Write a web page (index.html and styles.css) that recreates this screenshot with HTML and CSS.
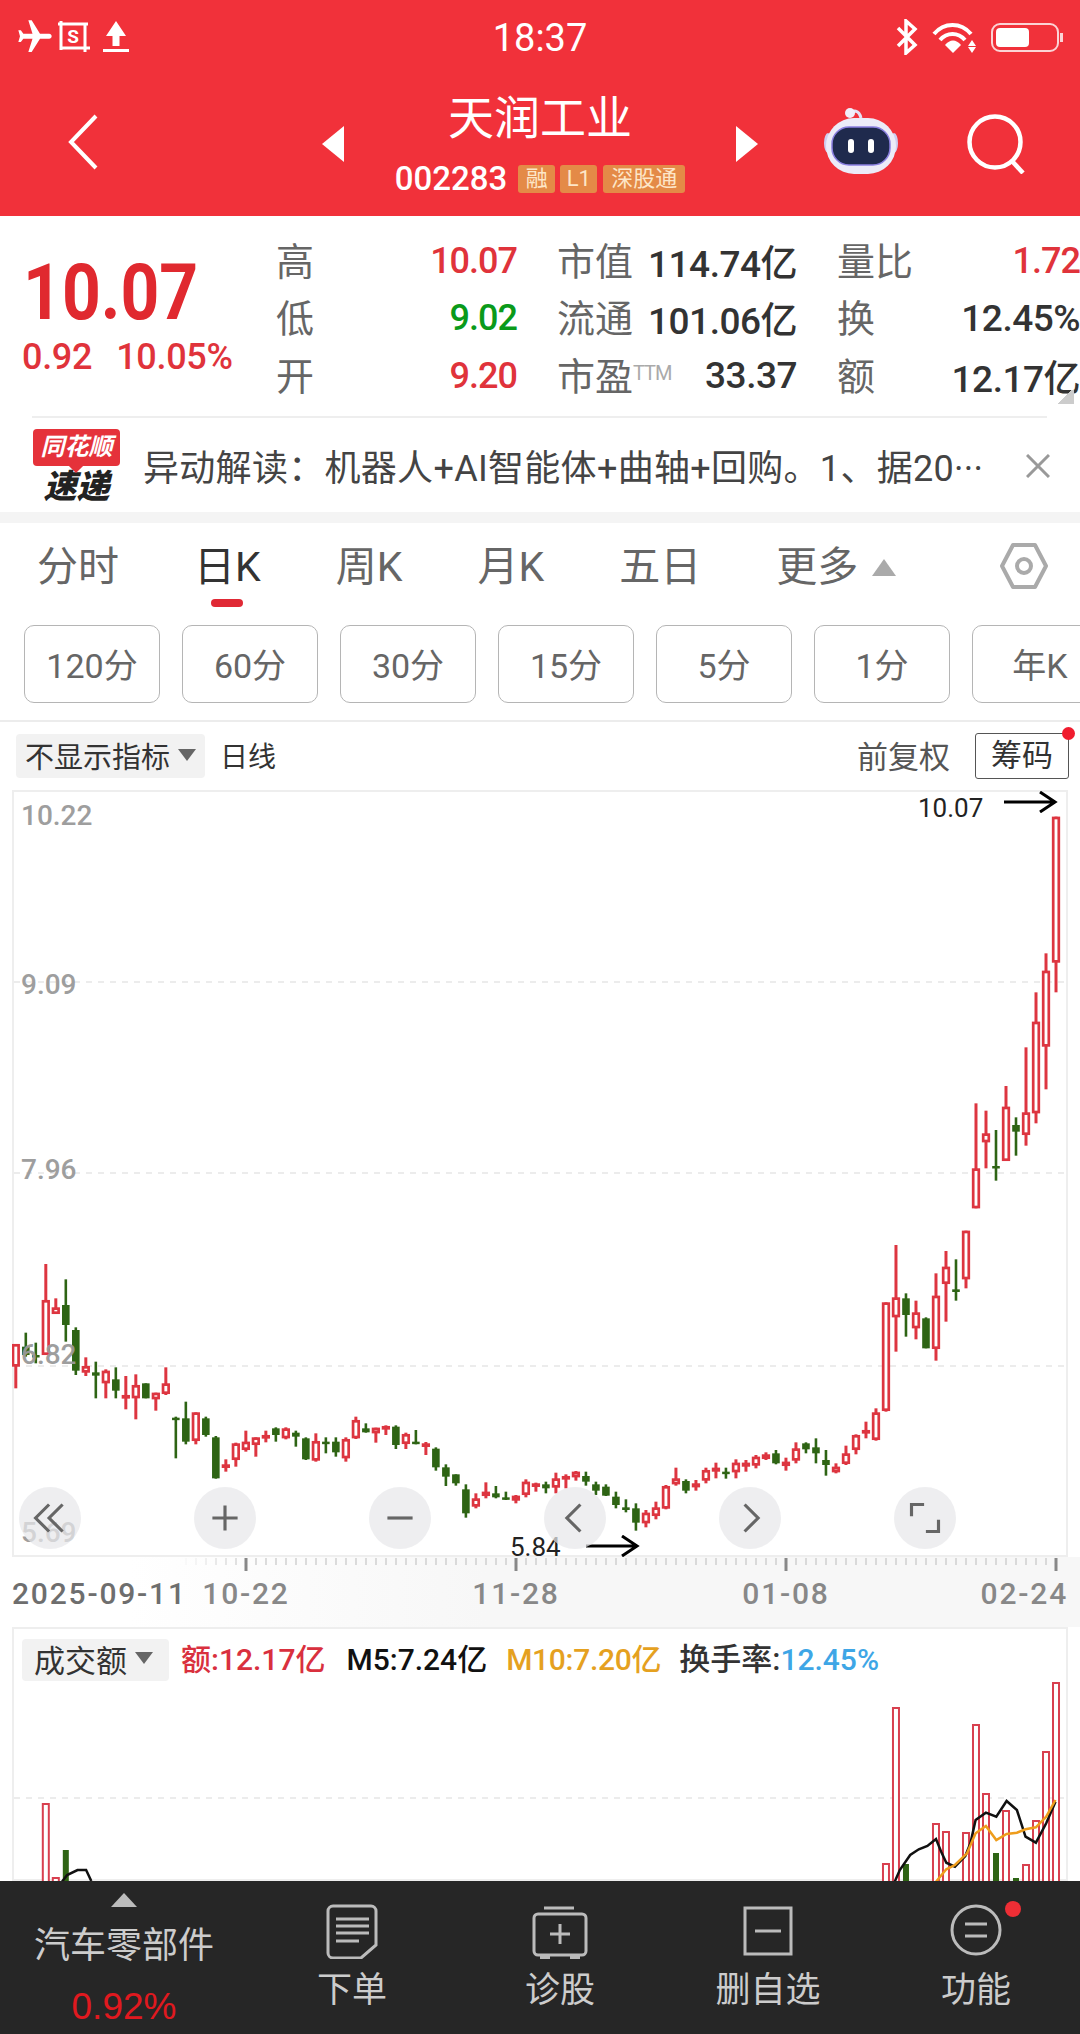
FILE: index.html
```html
<!DOCTYPE html>
<html lang="zh-CN">
  <head>
    <meta charset="UTF-8" />
    <meta name="viewport" content="width=device-width, initial-scale=1.0" />
    <title>天润工业</title>
    <link rel="stylesheet" href="styles.css">
  </head>
  <body>
    <div id="app">
      <div class="top-red">
        <div class="status-bar">
          <div class="status-left">
            <svg class="ic-plane" viewBox="0 0 24 24"><path transform="rotate(90 12 12)" d="M21 16v-2l-8-5V3.5c0-.83-.67-1.5-1.5-1.5S10 2.67 10 3.5V9l-8 5v2l8-2.5V19l-2 1.5V22l3.5-1 3.5 1v-1.5L13 19v-5.5l8 2.5z"/></svg>
            <svg class="ic-sbox" viewBox="0 0 32 32"><path d="M0 3h30M3 0v29M27 3v28M3 27h29" fill="none" stroke="#fff" stroke-width="3"/><text x="15" y="22" text-anchor="middle" font-size="19" font-weight="700" fill="#fff" font-family="Roboto">S</text></svg>
            <svg class="ic-up" viewBox="0 0 26 32"><path d="M13 0l10 15h-6.500v10h-7V15H3z M0 28h26v3H0z"/></svg>
          </div>
          <div class="clock">18:37</div>
          <div class="status-right">
            <svg class="ic-bt" viewBox="0 0 24 36"><path d="M3 9l17 17-9 8V2l9 8L3 27" fill="none" stroke="#fff" stroke-width="3.500"/></svg>
            <svg class="ic-wifi" viewBox="0 0 46 32">
              <path d="M3 13C13 1 30 1 40 13" fill="none" stroke="#fff" stroke-width="4"/>
              <path d="M9 19C16 11 27 11 34 19" fill="none" stroke="#fff" stroke-width="4"/>
              <path d="M14 24C19 18 25 18 30 24l-8 8z"/>
              <path d="M41 19l4 6h-8z M37 26h8l-4 6z"/>
            </svg>
            <div class="battery"><div class="battery-level"></div></div>
          </div>
        </div>
        <div class="nav-bar">
          <svg class="ic-back" viewBox="0 0 31 56"><path d="M29 2L4 28l25 26" fill="none" stroke="#fff" stroke-width="4"/></svg>
          <div class="stock-switch">
            <svg class="ic-tri" viewBox="0 0 22 36"><path d="M22 0v36L0 18z"/></svg>
            <div class="stock-title">
              <div class="stock-name">天润工业</div>
              <div class="stock-code">
                <span>002283</span>
                <span class="tag">融</span>
                <span class="tag">L1</span>
                <span class="tag tag-wide">深股通</span>
              </div>
            </div>
            <svg class="ic-tri" viewBox="0 0 22 36"><path d="M0 0v36l22-18z"/></svg>
          </div>
          <svg class="ic-robot" viewBox="0 0 74 68">
            <path d="M26 8c3-6 9-5 11 3" fill="none" stroke="#e4e1f5" stroke-width="3"/>
            <circle cx="26" cy="6" r="5" fill="#f1eefa"/>
            <ellipse cx="4" cy="36" rx="4" ry="10" fill="#cfcdf0"/>
            <ellipse cx="70" cy="36" rx="4" ry="10" fill="#cfcdf0"/>
            <rect x="2" y="11" width="70" height="56" rx="28" fill="#ecebf8"/>
            <rect x="8" y="20" width="58" height="38" rx="17" fill="#1f2a4d" stroke="#8a7fe0" stroke-width="1.500"/>
            <rect x="24" y="32" width="6" height="14" rx="3" fill="#fff"/>
            <rect x="44" y="32" width="6" height="14" rx="3" fill="#fff"/>
          </svg>
          <svg class="ic-search" viewBox="0 0 60 60"><circle cx="28" cy="28" r="25.500" fill="none" stroke="#fff" stroke-width="4.500"/><path d="M45 47l11 12" stroke="#fff" stroke-width="4.500"/></svg>
        </div>
      </div>

      <div class="quote">
        <div class="quote-main">
          <div class="price">10.07</div>
          <div class="price-sub"><span>0.92</span><span>10.05%</span></div>
        </div>
        <div class="stats">
          <div class="stat"><span class="lbl">高</span><span class="val red">10.07</span></div>
          <div class="stat"><span class="lbl">市值</span><span class="val">114.74亿</span></div>
          <div class="stat"><span class="lbl">量比</span><span class="val red">1.72</span></div>
          <div class="stat"><span class="lbl">低</span><span class="val green">9.02</span></div>
          <div class="stat"><span class="lbl">流通</span><span class="val">101.06亿</span></div>
          <div class="stat"><span class="lbl">换</span><span class="val">12.45%</span></div>
          <div class="stat"><span class="lbl">开</span><span class="val red">9.20</span></div>
          <div class="stat"><span class="lbl">市盈<small>TTM</small></span><span class="val">33.37</span></div>
          <div class="stat"><span class="lbl">额</span><span class="val">12.17亿</span></div>
        </div>
        <div class="corner"></div>
      </div>
      <div class="sep"></div>

      <div class="news">
        <div class="news-logo">
          <div class="logo-top">同花顺</div>
          <div class="logo-bottom">速递</div>
        </div>
        <div class="news-text">异动解读：机器人+AI智能体+曲轴+回购。1、据20···</div>
        <svg class="ic-close" viewBox="0 0 24 24"><path d="M1 1l22 22M23 1L1 23" stroke="#999" stroke-width="3"/></svg>
      </div>

      <div class="period-tabs">
        <div class="tab">分时</div>
        <div class="tab active">日K</div>
        <div class="tab">周K</div>
        <div class="tab">月K</div>
        <div class="tab">五日</div>
        <div class="tab tab-more">更多<i class="tri-up"></i></div>
        <svg class="ic-hex" viewBox="0 0 48 46"><path d="M13 2h22l11 21-11 21H13L2 23z" fill="none" stroke="#aaa" stroke-width="4" stroke-linejoin="round"/><circle cx="24" cy="23" r="7" fill="none" stroke="#aaa" stroke-width="4"/></svg>
      </div>

      <div class="minute-btns">
        <div class="min-btn">120分</div>
        <div class="min-btn">60分</div>
        <div class="min-btn">30分</div>
        <div class="min-btn">15分</div>
        <div class="min-btn">5分</div>
        <div class="min-btn">1分</div>
        <div class="min-btn">年K</div>
      </div>

      <div class="chart-head">
        <div class="chip">不显示指标<i class="tri-down"></i></div>
        <div class="chart-type">日线</div>
        <div class="adjust">前复权</div>
        <div class="chip-btn">筹码<i class="red-dot"></i></div>
      </div>

      <div class="kline-frame">
        <svg id="kline" class="chart-svg" width="1056" height="767"></svg>
        <span class="axis-price" style="top:9px">10.22</span>
        <span class="axis-price" style="top:178px">9.09</span>
        <span class="axis-price" style="top:363px">7.96</span>
        <span class="axis-price" style="top:548px">6.82</span>
        <span class="axis-price" style="top:726px">5.69</span>
        <span class="mark" style="left:906px;top:2px">10.07</span>
        <svg class="mark-arrow" style="left:992px;top:1px" viewBox="0 0 54 22"><path d="M0 11h51M36 1l15 10-15 10" fill="none" stroke="#000" stroke-width="3"/></svg>
        <span class="mark" style="left:498px;top:741px">5.84</span>
        <svg class="mark-arrow" style="left:574px;top:745px" viewBox="0 0 54 22"><path d="M0 11h51M36 1l15 10-15 10" fill="none" stroke="#000" stroke-width="3"/></svg>
        <div class="zoom-btns">
          <div class="round-btn"><svg viewBox="0 0 40 40"><path d="M19 5L4 20l15 15M34 5L19 20l15 15" fill="none" stroke="#666" stroke-width="3.500"/></svg></div>
          <div class="round-btn"><svg viewBox="0 0 40 40"><path d="M6 20h28M20 6v28" stroke="#666" stroke-width="3.500"/></svg></div>
          <div class="round-btn"><svg viewBox="0 0 40 40"><path d="M6 20h28" stroke="#666" stroke-width="3.500"/></svg></div>
          <div class="round-btn"><svg viewBox="0 0 40 40"><path d="M26 5L11 20l15 15" fill="none" stroke="#666" stroke-width="3.500"/></svg></div>
          <div class="round-btn"><svg viewBox="0 0 40 40"><path d="M14 5l15 15-15 15" fill="none" stroke="#666" stroke-width="3.500"/></svg></div>
          <div class="round-btn"><svg viewBox="0 0 40 40"><path d="M5 18V5h14M35 22v13H21" fill="none" stroke="#666" stroke-width="3.500"/></svg></div>
        </div>
      </div>

      <div class="time-axis">
        <svg id="ticks" class="tick-svg" width="1080" height="16"></svg>
        <span class="date date-first">2025-09-11</span>
        <span class="date" style="left:246px">10-22</span>
        <span class="date" style="left:516px">11-28</span>
        <span class="date" style="left:786px">01-08</span>
        <span class="date date-last">02-24</span>
      </div>

      <div class="vol-frame">
        <svg id="volume" class="chart-svg" width="1056" height="254"></svg>
        <div class="vol-legend">
          <div class="chip chip-vol">成交额<i class="tri-down"></i></div>
          <span class="leg leg-red">额:12.17亿</span>
          <span class="leg leg-black">M5:7.24亿</span>
          <span class="leg leg-orange">M10:7.20亿</span>
          <span class="leg leg-dark">换手率:<b>12.45%</b></span>
        </div>
      </div>

      <div class="toolbar">
        <div class="tool tool-sector">
          <i class="tri-sector"></i>
          <div class="sector-name">汽车零部件</div>
          <div class="sector-pct">0.92%</div>
        </div>
        <div class="tool">
          <svg class="tool-ic" viewBox="0 0 56 56"><path d="M9 3h38a5 5 0 0 1 5 5v34L37 55H9a5 5 0 0 1-5-5V8a5 5 0 0 1 5-5z" fill="none" stroke="#bbb" stroke-width="3"/><path d="M12 16h33M12 23h33M12 30h33M12 38h23" stroke="#bbb" stroke-width="3"/></svg>
          <div class="tool-label">下单</div>
        </div>
        <div class="tool">
          <svg class="tool-ic" viewBox="0 0 56 56"><path d="M12 5h30M6 11h44a4 4 0 0 1 4 4v33a4 4 0 0 1-4 4H6a4 4 0 0 1-4-4V15a4 4 0 0 1 4-4z" fill="none" stroke="#bbb" stroke-width="3"/><path d="M18 31h20M28 21v20" stroke="#bbb" stroke-width="3"/><path d="M8 53h10v3H8zM38 53h10v3H38z" fill="#bbb"/></svg>
          <div class="tool-label">诊股</div>
        </div>
        <div class="tool">
          <svg class="tool-ic" viewBox="0 0 56 56"><path d="M5 5h46v46H5z" fill="none" stroke="#bbb" stroke-width="3"/><path d="M15 28h26" stroke="#bbb" stroke-width="3"/></svg>
          <div class="tool-label">删自选</div>
        </div>
        <div class="tool">
          <svg class="tool-ic" viewBox="0 0 56 56"><circle cx="28" cy="27" r="24" fill="none" stroke="#bbb" stroke-width="3"/><path d="M17 21h22M17 33h22" stroke="#bbb" stroke-width="3"/></svg>
          <div class="tool-label">功能</div>
          <i class="tool-dot"></i>
        </div>
      </div>
    </div>
    <script src="chart.js"></script>
  </body>
</html>
```

FILE: styles.css
```css
* {
  margin: 0;
  padding: 0;
  box-sizing: border-box;
}
html,
body {
  width: 1080px;
  height: 2034px;
  overflow: hidden;
  background-color: #fff;
  font-family: Roboto, "Noto Sans CJK SC", sans-serif;
}
i {
  display: block;
  font-style: normal;
}
svg {
  display: block;
  fill: #fff;
}
#app {
  width: 1080px;
  height: 2034px;
  overflow: hidden;
}

/* top red area */
.top-red {
  height: 216px;
  background-color: #f1313a;
  color: white;
}
.status-bar {
  height: 72px;
  padding: 2px 21px 0 15px;
  display: flex;
  justify-content: space-between;
  align-items: center;
  position: relative;
}
.status-left,
.status-right {
  display: flex;
  align-items: center;
}
.ic-plane {
  width: 40px;
  height: 40px;
  margin-right: 3px;
}
.ic-sbox {
  width: 32px;
  height: 32px;
  margin-right: 13px;
}
.ic-up {
  width: 26px;
  height: 32px;
}
.clock {
  font-size: 38px;
  position: absolute;
  left: 0;
  right: 0;
  margin-top: 2px;
  text-align: center;
}
.ic-bt {
  width: 24px;
  height: 36px;
  margin-right: 12px;
}
.ic-wifi {
  width: 46px;
  height: 32px;
  margin-right: 14px;
}
.battery {
  width: 68px;
  height: 29px;
  border: 2px solid #fbd3d5;
  border-radius: 9px;
  padding: 3px;
  position: relative;
}
.battery::after {
  content: "";
  position: absolute;
  right: -6px;
  top: 8px;
  width: 3px;
  height: 9px;
  background-color: #fbd3d5;
}
.battery-level {
  width: 33px;
  height: 100%;
  background-color: white;
  border-radius: 4px;
}
.nav-bar {
  height: 144px;
  position: relative;
  display: flex;
  align-items: center;
}
.ic-back {
  width: 31px;
  height: 56px;
  margin: -4px 0 0 67px;
}
.stock-switch {
  display: flex;
  align-items: center;
  margin-left: 224px;
  width: 436px;
  justify-content: space-between;
}
.ic-tri {
  width: 22px;
  height: 36px;
}
.stock-title {
  text-align: center;
}
.stock-name {
  font-size: 46px;
  line-height: 54px;
  margin-top: -4px;
}
.stock-code {
  display: flex;
  align-items: center;
  font-size: 33px;
  font-weight: 500;
  margin-top: 20px;
  gap: 5px;
  line-height: 28px;
}
.stock-code span:first-child {
  margin-right: 6px;
}
.tag {
  width: 37px;
  height: 28px;
  background-color: #e48a47;
  color: #fde6c8;
  font-size: 22px;
  font-weight: 400;
  text-align: center;
  border-radius: 3px;
}
.tag-wide {
  width: 82px;
  margin-left: 1px;
}
.ic-robot {
  width: 74px;
  height: 68px;
  margin: -6px 0 0 66px;
}
.ic-search {
  width: 60px;
  height: 60px;
  margin: -1px 0 0 69px;
}

/* quote */
.quote {
  height: 200px;
  display: flex;
  position: relative;
}
.quote-main {
  width: 276px;
  padding: 37px 0 0 22px;
  flex-shrink: 0;
}
.price {
  font-size: 77px;
  line-height: 80px;
  font-weight: 700;
  color: #e0292f;
  transform: scaleX(0.88);
  transform-origin: 9px 0;
}
.price-sub {
  display: flex;
  gap: 24px;
  font-size: 36px;
  line-height: 44px;
  font-weight: 500;
  color: #e0333b;
  margin-top: 2px;
  letter-spacing: -0.3px;
}
.stats {
  display: grid;
  grid-template-columns: 241px 240px 243px;
  grid-auto-rows: 57.5px;
  column-gap: 40px;
  padding-top: 15px;
  flex-shrink: 0;
  width: 804px;
}
.stat {
  display: flex;
  justify-content: space-between;
  align-items: center;
  white-space: nowrap;
}
.lbl {
  font-size: 38px;
  color: #666;
  margin-bottom: 3px;
}
.lbl small {
  font-size: 20px;
  color: #aaa;
  letter-spacing: -1px;
  vertical-align: 10px;
}
.val {
  font-size: 37px;
  font-weight: 500;
  letter-spacing: -0.5px;
  color: #333;
  margin-top: 2px;
}
.val.red,
.val.green {
  font-size: 36px;
  letter-spacing: -1px;
}
.red {
  color: #e0333b;
}
.green {
  color: #0a9a1a;
}
.corner {
  position: absolute;
  left: 1056px;
  top: 174px;
  width: 18px;
  height: 14px;
  background: linear-gradient(135deg, transparent 50%, #ccc 50%);
}
.sep {
  height: 2px;
  margin: 0 33px 0 32px;
  background-color: #eee;
}

/* news */
.news {
  height: 105px;
  display: flex;
  align-items: center;
  border-bottom: 11px solid #f4f4f4;
  padding-left: 33px;
  position: relative;
}
.news-logo {
  width: 87px;
  margin-top: 2px;
  flex-shrink: 0;
}
.logo-top {
  height: 37px;
  background-color: #e5323a;
  color: white;
  font-size: 24px;
  font-weight: 700;
  font-style: italic;
  text-align: center;
  line-height: 36px;
  border-radius: 4px;
  position: relative;
}
.logo-top::after {
  content: "";
  position: absolute;
  left: 38px;
  bottom: -5px;
  width: 10px;
  height: 10px;
  background-color: #e5323a;
  transform: rotate(45deg);
}
.logo-bottom {
  font-size: 33px;
  line-height: 32px;
  font-weight: 900;
  font-style: italic;
  color: #222;
  text-align: center;
  margin-top: 5px;
}
.news-text {
  font-size: 36px;
  letter-spacing: 0.3px;
  color: #444;
  margin-left: 23px;
  white-space: nowrap;
  width: 860px;
}
.ic-close {
  width: 24px;
  height: 24px;
  position: absolute;
  left: 1026px;
  top: 36px;
}

/* period tabs */
.period-tabs {
  height: 87px;
  display: flex;
  align-items: flex-start;
  padding: 20px 0 0 37px;
  gap: 75px;
  position: relative;
}
.tab {
  font-size: 41px;
  line-height: 48px;
  color: #666;
  position: relative;
}
.tab.active {
  color: #333;
}
.tab.active::after {
  content: "";
  position: absolute;
  left: 17px;
  top: 56px;
  width: 32px;
  height: 8px;
  border-radius: 4px;
  background-color: #e02935;
}
.tab-more {
  display: flex;
  align-items: center;
}
.tri-up {
  width: 0;
  height: 0;
  margin-left: 14px;
  border-left: 12px solid transparent;
  border-right: 12px solid transparent;
  border-bottom: 17px solid #aaa;
}
.ic-hex {
  width: 48px;
  height: 46px;
  position: absolute;
  left: 1000px;
  top: 20px;
}

/* minute buttons */
.minute-btns {
  height: 112px;
  display: flex;
  gap: 22px;
  padding: 15px 0 0 24px;
  border-bottom: 2px solid #ececec;
  overflow: hidden;
}
.min-btn {
  width: 136px;
  height: 78px;
  flex-shrink: 0;
  border: 1px solid #b5b5b5;
  border-radius: 10px;
  font-size: 34px;
  line-height: 80px;
  color: #666;
  text-align: center;
}

/* chart head */
.chart-head {
  height: 68px;
  display: flex;
  align-items: center;
  padding: 0 11px 0 16px;
}
.chip {
  width: 189px;
  height: 44px;
  background-color: #f2f2f2;
  border-radius: 4px;
  display: flex;
  align-items: center;
  padding: 0 0 3px 9px;
  font-size: 29px;
  color: #333;
  white-space: nowrap;
}
.tri-down {
  width: 0;
  height: 0;
  margin-left: 8px;
  border-left: 9px solid transparent;
  border-right: 9px solid transparent;
  border-top: 12px solid #666;
}
.chart-type {
  font-size: 28px;
  color: #333;
  margin: 0 0 3px 15px;
}
.adjust {
  font-size: 31px;
  color: #555;
  margin: 0 0 3px auto;
}
.chip-btn {
  width: 94px;
  height: 46px;
  margin-left: 25px;
  border: 1px solid #555;
  border-radius: 3px;
  font-size: 31px;
  line-height: 43px;
  color: #333;
  text-align: center;
  position: relative;
}
.red-dot {
  position: absolute;
  right: -7px;
  top: -7px;
  width: 13px;
  height: 13px;
  border-radius: 50%;
  background-color: #f01c2e;
}

/* k line */
.kline-frame {
  width: 1056px;
  height: 767px;
  margin-left: 12px;
  position: relative;
  box-shadow: inset 0 0 0 2px #eeeeee;
}
.chart-svg {
  position: absolute;
  left: 0;
  top: 0;
  fill: none;
}
.axis-price {
  position: absolute;
  left: 9px;
  font-size: 28px;
  line-height: 34px;
  font-weight: 500;
  color: #999;
  opacity: 0.95;
}
.mark {
  position: absolute;
  font-size: 26px;
  line-height: 32px;
  color: #222;
}
.mark-arrow {
  position: absolute;
  width: 54px;
  height: 22px;
  fill: none;
}
.zoom-btns {
  position: absolute;
  left: 7px;
  top: 697px;
  display: flex;
  gap: 113px;
}
.round-btn {
  width: 62px;
  height: 62px;
  border-radius: 50%;
  background-color: rgba(232, 232, 234, 0.72);
  display: flex;
  align-items: center;
  justify-content: center;
}
.round-btn svg {
  width: 36px;
  height: 36px;
  fill: none;
}

/* time axis */
.time-axis {
  height: 70px;
  position: relative;
  background: linear-gradient(90deg, #fff 12%, #f7f7f7 45%);
}
.tick-svg {
  position: absolute;
  left: 0;
  top: 0;
  fill: none;
}
.date {
  position: absolute;
  top: 19px;
  font-size: 30px;
  line-height: 36px;
  font-weight: 500;
  letter-spacing: 1.800px;
  color: #888;
  transform: translateX(-50%);
}
.date-first {
  left: 12px;
  color: #6e6e6e;
  transform: none;
}
.date-last {
  left: auto;
  right: 12px;
  transform: none;
}

/* volume */
.vol-frame {
  width: 1056px;
  height: 254px;
  margin-left: 12px;
  position: relative;
  overflow: hidden;
  background-color: #fff;
  box-shadow: inset 0 0 0 2px #eeeeee;
}
.vol-legend {
  position: relative;
  display: flex;
  align-items: center;
  gap: 21px;
  padding: 7px 0 0 10px;
  white-space: nowrap;
}
.chip-vol {
  width: 147px;
  height: 42px;
  font-size: 31px;
  padding-left: 12px;
  margin-right: -9px;
  flex-shrink: 0;
}
.leg {
  font-size: 30px;
  font-weight: 500;
  margin-bottom: 6px;
}
.leg-red {
  color: #d9303e;
}
.leg-black {
  color: #111;
}
.leg-orange {
  color: #e5a11f;
  letter-spacing: -0.3px;
  margin-left: -2px;
}
.leg-dark {
  color: #333;
  font-size: 31px;
  margin-left: -3px;
}
.leg-dark b {
  font-size: 30px;
  font-weight: 500;
  color: #3ea6e6;
}

/* bottom toolbar */
.toolbar {
  height: 153px;
  background-color: #262626;
  display: grid;
  grid-template-columns: 248px repeat(4, 208px);
  color: #ccc;
}
.tool {
  display: flex;
  flex-direction: column;
  align-items: center;
  padding-top: 22px;
  position: relative;
}
.tool-ic {
  width: 56px;
  height: 56px;
}
.tool-label {
  font-size: 35px;
  line-height: 44px;
  margin-top: 10px;
}
.tool-dot {
  position: absolute;
  left: 133px;
  top: 20px;
  width: 16px;
  height: 16px;
  border-radius: 50%;
  background-color: #ee2e35;
}
.tool-sector {
  padding-top: 12px;
}
.tri-sector {
  width: 0;
  height: 0;
  border-left: 13px solid transparent;
  border-right: 13px solid transparent;
  border-bottom: 14px solid #bbb;
}
.sector-name {
  font-size: 36px;
  line-height: 44px;
  margin-top: 17px;
}
.sector-pct {
  font-family: "Liberation Sans", sans-serif;
  font-size: 37px;
  line-height: 44px;
  color: #e0191f;
  margin-top: 17px;
}
```

FILE: chart.js
```js
const RED = "#dd3540";
const GREEN = "#2e6414";
const NS = "http://www.w3.org/2000/svg";

// high, body top, body bottom, low, 1 = up (hollow red) 0 = down (green)
const candles = [
  [312,312,380,445,1],[278,320,345,350,0],[308,345,352,370,0],[72,180,345,345,1],[175,202,222,222,1],
  [118,195,255,305,0],[262,270,392,405,0],[352,378,398,408,1],[365,397,407,475,0],[388,392,430,475,1],
  [382,418,452,475,0],[408,465,475,508,1],[403,435,475,538,1],[430,430,475,475,0],[458,458,478,512,1],
  [382,430,462,465,1],[530,533,538,655,0],[485,535,605,613,0],[517,517,603,613,1],[530,535,585,590,0],
  [588,592,715,716,0],[658,673,682,695,1],[608,610,660,680,1],[572,605,630,635,1],[592,592,615,650,1],
  [572,585,595,607,1],[562,565,585,605,0],[562,565,595,598,1],[572,578,590,620,0],[592,595,658,660,0],
  [580,603,662,665,1],[592,605,610,640,0],[592,605,637,650,0],[592,597,655,665,1],[530,540,595,597,1],
  [550,565,577,578,0],[563,563,580,608,1],[556,558,565,585,1],[556,560,615,627,0],[578,582,612,627,1],
  [570,605,612,613,0],[606,610,620,645,1],[622,626,682,692,0],[673,682,710,738,0],[703,703,730,737,0],
  [733,748,820,833,0],[760,775,800,805,1],[727,755,768,775,1],[738,760,772,775,0],[755,772,778,780,0],
  [765,767,782,790,1],[718,725,765,772,1],[728,730,738,755,1],[725,733,745,760,0],[698,715,743,760,1],
  [703,708,712,745,1],[693,695,712,722,1],[695,708,725,737,0],[725,733,752,765,0],[733,740,767,768,0],
  [755,770,795,805,0],[778,802,810,817,0],[790,805,848,872,0],[810,818,850,862,1],[785,802,828,838,1],
  [735,738,806,808,1],[683,715,733,737,1],[718,723,752,760,0],[720,730,742,752,1],[683,690,722,730,1],
  [668,683,695,715,1],[683,695,702,716,0],[658,668,697,715,1],[660,668,680,695,1],[645,650,677,685,1],
  [637,643,657,660,1],[630,640,670,673,0],[653,665,678,692,1],[607,625,662,670,1],[607,610,628,640,0],
  [595,622,640,670,0],[630,660,675,707,0],[670,680,697,700,1],[617,640,672,675,1],[583,585,630,643,1],
  [545,570,578,595,1],[505,517,600,602,1],[187,187,513,515,1],[15,172,232,335,1],[160,175,225,290,0],
  [182,217,265,298,1],[232,235,325,325,0],[100,167,327,362,1],[33,80,132,245,1],[58,148,156,182,0],
  [-28,-28,118,145,1],[-410,-215,-95,-95,1],[-388,-320,-293,-215,1],[-330,-222,-217,-178,0],[-462,-400,-237,-237,1],
  [-368,-345,-325,-253,0],[-578,-383,-315,-283,1],[-743,-655,-380,-350,1],[-860,-808,-580,-452,1],[-1270,-1270,-832,-743,1],
];

// candle index, page y of the bar top, up/down
const volumes = [
  [3,1803,1],[4,1877,1],[5,1850,0],[87,1863,1],[88,1707,1],[89,1864,0],[92,1823,1],[93,1831,1],
  [95,1832,1],[96,1724,1],[97,1793,1],[98,1853,0],[99,1810,1],[100,1878,0],[101,1864,1],[102,1820,1],
  [103,1751,1],[104,1682,1],
];

const ma5Left = [[180,785],[195,765],[225,750],[250,750],[265,783]];
const ma5Right = [[1030,785],[1045,750],[1075,705],[1100,688],[1125,678],[1150,657],[1165,695],[1180,728],[1205,740],[1235,708],[1250,670],[1265,600],[1295,578],[1325,590],[1355,543],[1385,570],[1410,650],[1440,668],[1470,610],[1497,545]];
const ma10Right = [[1150,785],[1180,748],[1205,735],[1240,700],[1265,640],[1295,618],[1325,660],[1355,642],[1385,638],[1410,628],[1440,622],[1470,590],[1497,540]];

function add(svg, tag, attrs) {
  const el = document.createElementNS(NS, tag);
  Object.keys(attrs).forEach((k) => el.setAttribute(k, attrs[k]));
  svg.appendChild(el);
  return el;
}

function candleX(i) {
  return 3.8 + i * 10.002;
}

function drawKline() {
  const svg = document.getElementById("kline");
  [982, 1173, 1366].forEach((y) => {
    add(svg, "line", { x1: 2, x2: 1054, y1: y - 790, y2: y - 790, stroke: "#e6e6e6", "stroke-width": 1.5, "stroke-dasharray": "6 6" });
  });
  const y = (v) => v / 3 + 450;
  candles.forEach((c, i) => {
    const x = candleX(i);
    const color = c[4] ? RED : GREEN;
    add(svg, "line", { x1: x, x2: x, y1: y(c[0]), y2: y(c[3]), stroke: color, "stroke-width": c[4] ? 3 : 2.6 });
    if (c[4]) {
      add(svg, "rect", { x: x - 2.8, y: y(c[1]) + 1.3, width: 5.6, height: Math.max(y(c[2]) - y(c[1]) - 2.6, 1), fill: "#fff", stroke: color, "stroke-width": 2.7 });
    } else {
      add(svg, "rect", { x: x - 3.8, y: y(c[1]), width: 7.6, height: Math.max(y(c[2]) - y(c[1]), 2.5), fill: color });
    }
  });
}

function drawTicks() {
  const svg = document.getElementById("ticks");
  for (let x = 186; x <= 1056; x += 10) {
    const major = (x - 246) % 270 === 0;
    add(svg, "line", {
      x1: x, x2: x, y1: 1, y2: major ? 14 : 8,
      stroke: major ? "#888" : "#bbb",
      "stroke-width": major ? 3 : 1,
      opacity: x < 246 ? (x - 176) / 70 : 1,
    });
  }
}

function toPoints(pts, offsetX) {
  return pts.map((p) => (p[0] / 2.904 + offsetX).toFixed(1) + "," + (p[1] / 3 - 7).toFixed(1)).join(" ");
}

function drawVolume() {
  const svg = document.getElementById("volume");
  add(svg, "line", { x1: 2, x2: 1054, y1: 171, y2: 171, stroke: "#e6e6e6", "stroke-width": 1.5, "stroke-dasharray": "6 6" });
  volumes.forEach((v) => {
    const x = candleX(v[0]);
    const top = v[1] - 1627;
    if (v[2]) {
      add(svg, "rect", { x: x - 3, y: top + 1, width: 6, height: 260, fill: "#fff", stroke: "#d8404f", "stroke-width": 2 });
    } else {
      add(svg, "rect", { x: x - 3, y: top, width: 6, height: 260, fill: GREEN });
    }
  });
  add(svg, "polyline", { points: toPoints(ma5Left, -12), fill: "none", stroke: "#111", "stroke-width": 2.5 });
  add(svg, "polyline", { points: toPoints(ma5Right, 528), fill: "none", stroke: "#111", "stroke-width": 2.5 });
  add(svg, "polyline", { points: toPoints(ma10Right, 528), fill: "none", stroke: "#ee9d1c", "stroke-width": 2.5 });
}

drawKline();
drawTicks();
drawVolume();
```
